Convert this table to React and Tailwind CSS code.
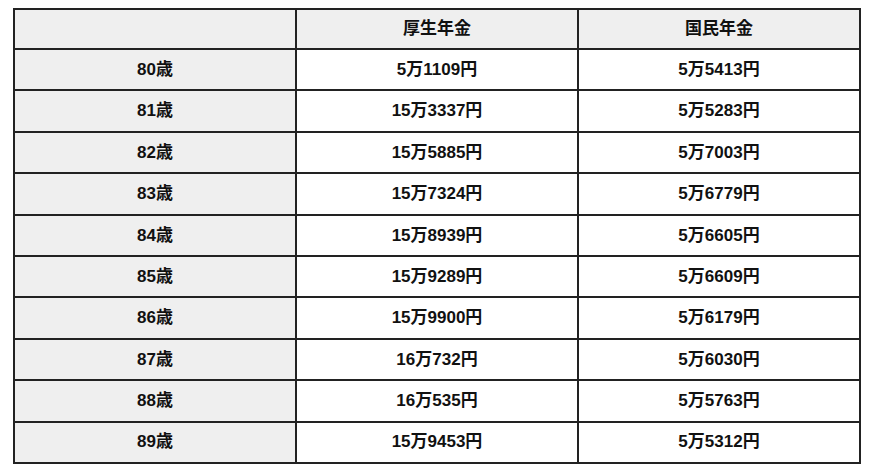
const rows = [
  ["80歳", "5万1109円", "5万5413円"],
  ["81歳", "15万3337円", "5万5283円"],
  ["82歳", "15万5885円", "5万7003円"],
  ["83歳", "15万7324円", "5万6779円"],
  ["84歳", "15万8939円", "5万6605円"],
  ["85歳", "15万9289円", "5万6609円"],
  ["86歳", "15万9900円", "5万6179円"],
  ["87歳", "16万732円", "5万6030円"],
  ["88歳", "16万535円", "5万5763円"],
  ["89歳", "15万9453円", "5万5312円"],
];

export default function App() {
  return (
    <div className="w-[870px] h-[474px] bg-white pt-[8px] pl-[13px]" style={{ fontFamily: '"Liberation Sans", "Noto Sans CJK JP", sans-serif' }}>
      <table className="w-[848px] border-collapse table-fixed text-[17px] font-bold text-[#111]">
        <thead>
          <tr className="h-[40px]">
            <th className="border-2 border-[#222] bg-[#efefef]"></th>
            <th className="border-2 border-[#222] bg-[#efefef]">厚生年金</th>
            <th className="border-2 border-[#222] bg-[#efefef]">国民年金</th>
          </tr>
        </thead>
        <tbody>
          {rows.map((r) => (
            <tr key={r[0]} className="h-[41.4px]">
              <td className="border-2 border-[#222] bg-[#efefef] text-center">{r[0]}</td>
              <td className="border-2 border-[#222] bg-white text-center">{r[1]}</td>
              <td className="border-2 border-[#222] bg-white text-center">{r[2]}</td>
            </tr>
          ))}
        </tbody>
      </table>
    </div>
  );
}
